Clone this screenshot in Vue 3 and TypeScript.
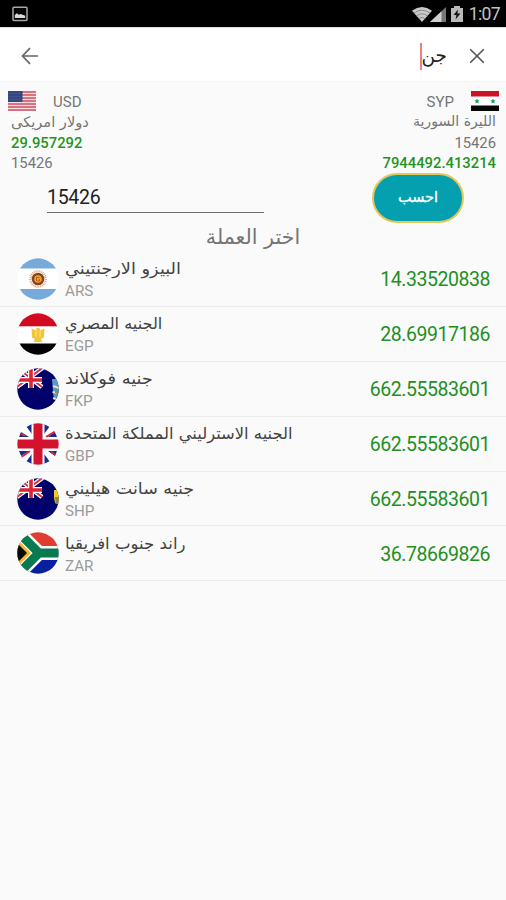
<script setup lang="ts">
import { ref } from 'vue'

interface Currency {
  code: string
  name: string
  rate: string
  stretch: number
}

const amount = ref('15426')
const currencies: Currency[] = [
  { code: 'ARS', name: 'البيزو الارجنتيني', rate: '14.33520838', stretch: 1.11 },
  { code: 'EGP', name: 'الجنيه المصري', rate: '28.69917186', stretch: 1.005 },
  { code: 'FKP', name: 'جنيه فوكلاند', rate: '662.55583601', stretch: 1.11 },
  { code: 'GBP', name: 'الجنيه الاسترليني المملكة المتحدة', rate: '662.55583601', stretch: 1.022 },
  { code: 'SHP', name: 'جنيه سانت هيليني', rate: '662.55583601', stretch: 1.09 },
  { code: 'ZAR', name: 'راند جنوب افريقيا', rate: '36.78669826', stretch: 1.035 },
]
</script>

<template>
  <div class="screen">
    <header class="status">
      <svg class="pic" width="16" height="16" viewBox="0 0 16 16">
        <rect x="1" y="1.200" width="14" height="13.300" rx="1" fill="none" stroke="#a8a8a8" stroke-width="1.500" />
        <path d="M2.800 12V9l2-1.700 2 1.500 2-.8 4.400 1.700V12z" fill="#d8d8d8" />
      </svg>
      <div class="sys">
        <svg width="20" height="15" viewBox="0 0 20 15">
          <path d="M0 3.800Q10-3.600 20 3.800L10 15z" fill="#c9c9c9" />
          <path d="M1.800 6.200Q10 .2 18.200 6.200M4.200 9Q10 4.600 15.800 9M6.600 11.600Q10 9 13.400 11.600" fill="none" stroke="#777" stroke-width=".8" />
        </svg>
        <svg class="cell" width="16" height="15" viewBox="0 0 16 15">
          <path d="M0 15L16 0V15z" fill="#777" />
          <path d="M0 15L11.500 4.200V15z" fill="#d0d0d0" />
        </svg>
        <svg class="bat" width="12" height="16" viewBox="0 0 12 16">
          <path d="M0 2h3V0h6v2h3v14H0z" fill="#b9b9b9" />
          <path d="M7 3.500L2.600 9H5.400L4.600 13.500 9.400 7.600H6.500z" fill="#111" />
        </svg>
        <span class="clock">1:07</span>
      </div>
    </header>

    <div class="search">
      <svg width="18" height="18" viewBox="0 0 18 18" fill="none" stroke="#666" stroke-width="1.700">
        <path d="M17 9H1.500M9 1.200L1.500 9 9 16.800" />
      </svg>
      <div class="query"><span class="q">جن</span><i class="caret"></i></div>
      <svg width="16" height="16" viewBox="0 0 16 16" fill="none" stroke="#555" stroke-width="1.600">
        <path d="M1.200 1.200L14.800 14.800M14.800 1.200L1.200 14.800" />
      </svg>
    </div>

    <section class="pair">
      <div class="side">
        <div class="head">
          <svg width="28" height="20" viewBox="0 0 28 20">
            <rect width="28" height="20" fill="#f3dfe3" />
            <path d="M0 1h28M0 4h28M0 7h28M0 10h28M0 13h28M0 16h28M0 19h28" stroke="#cf4f62" stroke-width="1.600" />
            <rect width="14.500" height="11" fill="#34477f" />
            <path d="M1.500 2.500h12M1.500 5.500h12M1.500 8.500h12" stroke="#5d6e9c" stroke-width=".8" stroke-dasharray="1 1.400" />
          </svg>
          <span>USD</span>
        </div>
        <div class="name ar" dir="rtl">دولار امريكى</div>
        <div class="num green bold">29.957292</div>
        <div class="num">15426</div>
      </div>
      <div class="side right">
        <div class="head">
          <span>SYP</span>
          <svg width="28" height="20" viewBox="0 0 28 20">
            <rect width="28" height="20" fill="#fff" />
            <rect width="28" height="5.500" fill="#cf1126" />
            <rect y="14.500" width="28" height="5.500" fill="#060606" />
            <path d="M6 7.500l.8 1.700 1.800.1-1.400 1.300.5 1.900L6 11.500l-1.700 1 .5-1.900-1.400-1.300 1.800-.1zM22 7.500l.8 1.700 1.800.1-1.400 1.300.5 1.900-1.700-1-1.700 1 .5-1.900-1.400-1.300 1.800-.1z" fill="#15965a" />
          </svg>
        </div>
        <div class="name ar" dir="rtl">الليرة السورية</div>
        <div class="num">15426</div>
        <div class="num green bold">7944492.413214</div>
      </div>
    </section>

    <section class="calc">
      <input v-model="amount" class="amount" type="text" />
      <button class="go ar" type="button">احسب</button>
    </section>

    <h2 class="title ar" dir="rtl">اختر العملة</h2>

    <ul class="list">
      <li v-for="c in currencies" :key="c.code" class="row">
        <svg class="flag" width="42" height="42" viewBox="0 0 42 42">
          <defs>
            <clipPath :id="'c' + c.code"><circle cx="21" cy="21" r="20.700" /></clipPath>
          </defs>
          <g :clip-path="`url(#c${c.code})`">
            <template v-if="c.code === 'ARS'">
              <rect width="42" height="42" fill="#fff" />
              <rect width="42" height="10.500" fill="#75aadb" />
              <rect y="31" width="42" height="11" fill="#75aadb" />
              <circle cx="21" cy="21" r="7.800" fill="none" stroke="#dba47a" stroke-width="2" stroke-dasharray="1 .8" />
              <circle cx="21" cy="21" r="6.300" fill="#86441e" />
              <circle cx="21" cy="21" r="3.800" fill="#eda22e" />
              <path d="M19.500 23v-3.500h3M22.500 21v2h-2" fill="none" stroke="#9b5420" stroke-width=".8" />
            </template>
            <template v-else-if="c.code === 'EGP'">
              <rect width="42" height="42" fill="#fff" />
              <rect width="42" height="13.300" fill="#d10a20" />
              <rect y="30.500" width="42" height="12" fill="#000" />
              <path d="M14.500 15.500l4.500 2 .5-2.500h3l.5 2.500 4.500-2-.5 9-3 1.500 1.500 3h-9l1.500-3-3-1.500z" fill="#f3c63a" />
              <path d="M19 18v6M23 18v6" stroke="#fff0ba" stroke-width=".7" />
            </template>
            <template v-else-if="c.code === 'GBP'">
              <rect width="42" height="42" fill="#fff" />
              <path d="M9 3L17 14V0zM33 3L25 14V0zM9 39L17 28V42zM33 39L25 28V42zM4 9L12 14H2zM38 9L31 14h9zM4 33L12 28H2zM38 33L31 28h9z" fill="#14308c" />
              <path d="M29 14L42 6M13 28L0 37M0 8L8 13M34 29l8 5" stroke="#d8233c" stroke-width="2" />
              <path d="M21 0V42M0 21H42" stroke="#fff" stroke-width="13" />
              <path d="M21 0V42M0 21H42" stroke="#d3122e" stroke-width="9" />
            </template>
            <template v-else-if="c.code === 'ZAR'">
              <rect width="42" height="21" fill="#e03c31" />
              <rect y="21" width="42" height="21" fill="#0820a0" />
              <path d="M-5-6L22 21 -5 48M22 21H42" fill="none" stroke="#fff" stroke-width="14" />
              <path d="M-5-6L22 21 -5 48M22 21H42" fill="none" stroke="#087a50" stroke-width="9" />
              <path d="M-4 3L14 21 -4 39z" fill="#f5b52c" />
              <path d="M-4 7L10 21 -4 35z" fill="#080808" />
            </template>
            <template v-else>
              <rect width="42" height="42" fill="#00006b" />
              <path d="M-2-2L25 19M28-2L0 19" stroke="#fff" stroke-width="4.500" />
              <path d="M-2-2L25 19M28-2L0 19" stroke="#d8324a" stroke-width="2" />
              <path d="M14 0V20M0 12H25" stroke="#fff" stroke-width="6" />
              <path d="M14 0V20M0 12H25" stroke="#dd2338" stroke-width="3.600" />
              <g v-if="c.code === 'FKP'">
                <path d="M35 11h7v13q-1 6-5 8l-1-9z" fill="#5b9bc4" />
                <path d="M36 18l6 2M35.500 24l5 1M36 30l3 1" stroke="#e6e1c8" stroke-width="2" />
                <path d="M38 20l4 3v4l-4-2z" fill="#6b9b5b" />
              </g>
              <g v-else>
                <path d="M37 12h6v14h-4q-2-3-2-7z" fill="#f0c92a" />
                <path d="M38 19h5v7h-4z" fill="#8a8a38" />
              </g>
            </template>
          </g>
        </svg>
        <div class="text">
          <div class="cname ar" dir="rtl" :style="{ transform: `scaleX(${c.stretch})` }">{{ c.name }}</div>
          <div class="code">{{ c.code }}</div>
        </div>
        <div class="rate">{{ c.rate }}</div>
      </li>
    </ul>
  </div>
</template>

<style>
body { background: #fafafa; }
</style>

<style scoped>
.screen { width: 506px; height: 900px; overflow: hidden; background: #fafafa; font-family: Roboto, "Noto Sans", sans-serif; color: #757575; }
.ar { font-family: "DejaVu Sans", sans-serif; white-space: nowrap; }
svg { display: block; flex: none; }
.status { height: 27px; box-sizing: border-box; background: #000; display: flex; align-items: center; justify-content: space-between; padding: 1px 6px 0 12px; }
.sys { display: flex; align-items: center; }
.cell { margin-left: -2px; }
.bat { margin-left: 5px; }
.clock { margin-left: 6px; font-size: 17.500px; letter-spacing: -.6px; line-height: 26px; color: #c4c4c4; }
.search { height: 55px; box-sizing: border-box; background: #fff; border-top: 1px solid #ddd; border-bottom: 1px solid #f3f3f3; padding: 3px 21px 0 21px; display: flex; align-items: center; }
.query { margin-left: auto; margin-right: 22px; display: flex; flex-direction: row-reverse; align-items: center; }
.q { font: 18.500px/28px "DejaVu Sans", sans-serif; color: #222; }
.caret { width: 2px; height: 27px; margin-right: -1px; background: #f08080; }
.pair { height: 91px; display: flex; justify-content: space-between; box-sizing: border-box; padding: 9px 7px 0 8px; }
.head { display: flex; align-items: center; gap: 17px; height: 20px; font-size: 15px; }
.head span { padding-top: 2px; }
.side { font-size: 15px; }
.right { display: flex; flex-direction: column; align-items: flex-end; }
.name { padding: 0 3px; height: 22px; line-height: 21px; font-size: 14.600px; }
.right .name { font-size: 14.100px; }
.num { padding: 0 3px; height: 20px; line-height: 21px; font-size: 14.800px; }
.green { color: #1f941f; }
.bold { font-weight: 500; }
.calc { height: 51px; display: flex; align-items: flex-start; justify-content: space-between; padding: 0 42px 0 47px; }
.amount { width: 217px; height: 40px; box-sizing: border-box; border: 0; border-bottom: 1px solid #6d6d6d; border-radius: 0; background: none; outline: 0; padding: 9px 0 0; font: 19.500px/24px Roboto, sans-serif; letter-spacing: -.3px; color: #222; }
.go { width: 92px; height: 50px; box-sizing: border-box; border: 2px solid #e9c658; border-radius: 25px; background: #05a0b0; color: #fff; font-size: 14.500px; font-weight: 400; -webkit-text-stroke: .3px #fff; padding: 0 0 3px; }
.title { margin: 0; height: 28px; line-height: 26px; text-align: center; font-size: 20.600px; font-weight: 400; }
.list { list-style: none; margin: 0; padding: 0; }
.row { height: 54.900px; box-sizing: border-box; border-bottom: 1px solid #ececec; padding: 0 16px 0 17px; display: flex; align-items: center; }
.text { margin-left: 6px; padding-top: 1px; flex: 1; display: flex; flex-direction: column; align-items: flex-start; }
.cname { font-size: 16px; line-height: 24px; height: 24px; color: #424242; transform-origin: left center; }
.code { font-size: 15.200px; line-height: 20px; color: #9b9b9b; }
.rate { padding-top: 2px; font-size: 19.500px; letter-spacing: -.45px; color: #1f8f1f; }
</style>
